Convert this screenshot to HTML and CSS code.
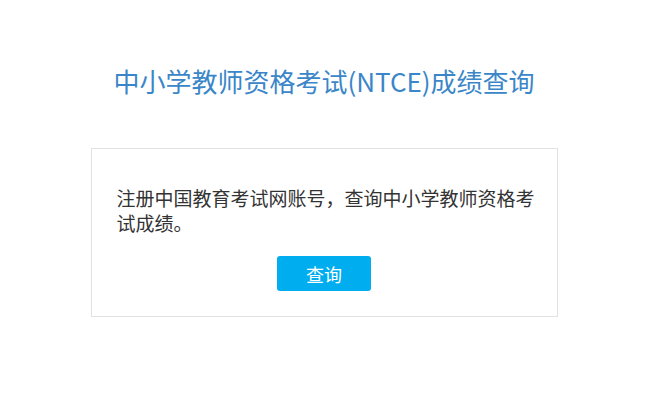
FILE: index.html
```html
<!DOCTYPE html>
<html>
  <head>
    <meta charset="utf-8" />
    <title>成绩查询</title>
    <link rel="stylesheet" href="styles.css">
  </head>
  <body>
    <div class="page">
      <h1 class="title">中小学教师资格考试(NTCE)成绩查询</h1>
      <div class="card">
        <p class="desc">注册中国教育考试网账号，查询中小学教师资格考试成绩。</p>
        <div class="actions">
          <button class="btn">查询</button>
        </div>
      </div>
    </div>
  </body>
</html>
```

FILE: styles.css
```css
body,
html {
  margin: 0;
  padding: 0;
  background: white;
  font-family: "Noto Sans CJK SC", "Noto Sans", sans-serif;
}
.page {
  padding-top: 64px;
  padding-left: 2px;
}
.title {
  margin: 0;
  text-align: center;
  font-size: 26px;
  line-height: 34px;
  font-weight: normal;
  color: #3a86c8;
}
.card {
  width: 467px;
  box-sizing: border-box;
  margin: 50px auto 0;
  border: 1px solid #e2e2e2;
  padding: 36px 25px 25px;
}
.desc {
  margin: 0 -6px 0 0;
  font-size: 19px;
  line-height: 25px;
  color: #333;
}
.actions {
  margin-top: 21px;
  text-align: center;
}
.btn {
  width: 94px;
  height: 35px;
  border: none;
  border-radius: 3px;
  background-color: #00adef;
  color: #fff;
  font-family: inherit;
  font-size: 18px;
  padding: 0;
  cursor: pointer;
}
```
